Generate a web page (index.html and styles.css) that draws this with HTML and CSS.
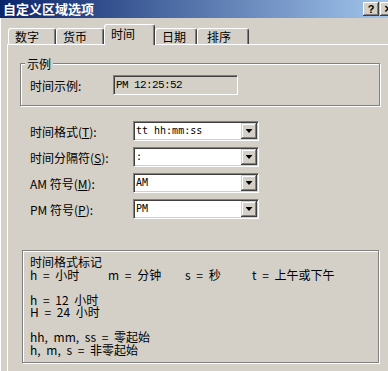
FILE: index.html
```html
<!doctype html>
<html lang="zh-CN">
<head>
	<meta charset="UTF-8" />
	<title>自定义区域选项</title>
	<link rel="stylesheet" href="styles.css">
</head>
<body>

<div class="window">
	<div class="titlebar">
		<span class="title">自定义区域选项</span>
		<span class="caption-btn help">?</span>
		<span class="caption-btn close">×</span>
	</div>

	<div class="client">
		<div class="tabs">
			<div class="tab tab-num">数字</div>
			<div class="tab tab-cur">货币</div>
			<div class="tab tab-time selected">时间</div>
			<div class="tab tab-date">日期</div>
			<div class="tab tab-sort">排序</div>
		</div>

		<div class="panel">
			<div class="group">
				<span class="group-title">示例</span>
				<div class="sample-row">
					<span class="sample-label">时间示例:</span>
					<div class="sample">PM 12:25:52</div>
				</div>
			</div>

			<div class="fields">
				<div class="field">
					<label>时间格式(<u>T</u>):</label>
					<div class="combo"><span class="combo-value">tt hh:mm:ss</span><span class="combo-btn"></span></div>
				</div>
				<div class="field">
					<label>时间分隔符(<u>S</u>):</label>
					<div class="combo"><span class="combo-value">:</span><span class="combo-btn"></span></div>
				</div>
				<div class="field">
					<label>AM 符号(<u>M</u>):</label>
					<div class="combo"><span class="combo-value">AM</span><span class="combo-btn"></span></div>
				</div>
				<div class="field">
					<label>PM 符号(<u>P</u>):</label>
					<div class="combo"><span class="combo-value">PM</span><span class="combo-btn"></span></div>
				</div>
			</div>

			<div class="notes">
				<div class="notes-block">
					<div>时间格式标记</div>
					<div><span class="col c1">h = 小时</span><span class="col c2">m = 分钟</span><span class="col c3">s = 秒</span><span>t = 上午或下午</span></div>
				</div>
				<div class="notes-block">
					<div>h = 12 小时</div>
					<div>H = 24 小时</div>
				</div>
				<div class="notes-block">
					<div>hh, mm, ss = 零起始</div>
					<div>h, m, s = 非零起始</div>
				</div>
			</div>
		</div>
	</div>
</div>

</body>
</html>
```

FILE: styles.css
```css
body{
	margin: 0;
	padding: 0;
	background: #D4D0C8;
	font-family: "Noto Sans CJK SC", sans-serif;
	font-size: 12px;
	color: #000;
	overflow: hidden;
}
.window{
	width: 400px;
	height: 371px;
}
.titlebar{
	height: 18px;
	display: flex;
	align-items: center;
	padding: 0 4px 0 3px;
	background: linear-gradient(to right, #0A246A, #A6CAF0);
}
.title{
	color: #fff;
	font-weight: bold;
	font-size: 13px;
	line-height: 18px;
}
.caption-btn{
	width: 16px;
	height: 14px;
	box-sizing: border-box;
	background: #D4D0C8;
	box-shadow: inset -1px -1px #404040, inset 1px 1px #fff, inset -2px -2px #808080;
	font-family: "Liberation Sans", sans-serif;
	font-weight: bold;
	font-size: 11px;
	line-height: 14px;
	text-align: center;
}
.help{
	margin-left: auto;
}
.close{
	margin-left: 1px;
	font-size: 13px;
}
.client{
	border-left: 1px solid #fff;
	padding-left: 6px;
	height: 353px;
}
.tabs{
	display: flex;
	align-items: flex-end;
	height: 26px;
	padding-left: 1px;
}
.tab{
	height: 16px;
	box-sizing: border-box;
	border: 1px solid #fff;
	border-bottom: 0;
	border-right-color: #404040;
	border-radius: 3px 3px 0 0;
	box-shadow: inset -1px 0 #808080;
	padding-left: 6px;
	line-height: 15px;
}
.tab-num{ width: 48px; }
.tab-cur{ width: 48px; }
.tab-time{ width: 51px; }
.tab-date{ width: 42px; }
.tab-sort{ width: 52px; padding-left: 9px; }
.tab.selected{
	position: relative;
	z-index: 1;
	height: 21px;
	margin-bottom: -1px;
	background: #D4D0C8;
	line-height: 17px;
}
.panel{
	border-top: 1px solid #fff;
	border-left: 1px solid #fff;
	height: 326px;
}
.group{
	position: relative;
	margin: 18px 0 0 12px;
	width: 360px;
	box-sizing: border-box;
	border: 1px solid #808080;
	box-shadow: inset 1px 1px #fff, 1px 1px #fff;
	padding: 11px 9px 10px 9px;
}
.group-title{
	position: absolute;
	top: -7px;
	left: 4px;
	padding: 0 2px;
	background: #D4D0C8;
	line-height: 13px;
}
.sample-row{
	display: flex;
	align-items: center;
}
.sample-label{
	width: 83px;
}
.sample{
	width: 125px;
	height: 20px;
	box-sizing: border-box;
	border: 1px solid;
	border-color: #808080 #fff #fff #808080;
	box-shadow: inset 1px 1px #404040;
	padding-left: 2px;
	font-family: "Liberation Mono", monospace;
	font-size: 11px;
	letter-spacing: -0.6px;
	line-height: 18px;
}
.fields{
	margin: 15px 0 0 22px;
	display: flex;
	flex-direction: column;
	gap: 6px;
}
.field{
	display: flex;
	align-items: center;
}
.field label{
	width: 103px;
}
.combo{
	width: 126px;
	height: 20px;
	box-sizing: border-box;
	display: flex;
	background: #fff;
	border: 1px solid;
	border-color: #808080 #fff #fff #808080;
	box-shadow: inset 1px 1px #404040, inset -1px -1px #D4D0C8;
	padding: 1px;
}
.combo-value{
	flex: 1;
	padding-left: 1px;
	font-family: "DejaVu Sans Mono", monospace;
	font-size: 10px;
	line-height: 16px;
}
.combo-btn{
	width: 16px;
	height: 16px;
	display: flex;
	align-items: center;
	justify-content: center;
	background: #D4D0C8;
	box-shadow: inset -1px -1px #404040, inset 1px 1px #D4D0C8, inset -2px -2px #808080, inset 2px 2px #fff;
}
.combo-btn::after{
	content: "";
	width: 7px;
	height: 4px;
	background: #000;
	clip-path: polygon(0 0, 100% 0, 50% 100%);
}
.notes{
	margin: 31px 0 0 14px;
	width: 357px;
	height: 113px;
	box-sizing: border-box;
	border: 1px solid #808080;
	box-shadow: inset 1px 1px #fff, 1px 1px #fff;
	padding: 5px 7px;
	line-height: 12.5px;
	word-spacing: 3px;
}
.notes-block + .notes-block{
	margin-top: 12.5px;
}
.col{
	display: inline-block;
}
.c1{ width: 78px; }
.c2{ width: 77px; }
.c3{ width: 67px; }
```
